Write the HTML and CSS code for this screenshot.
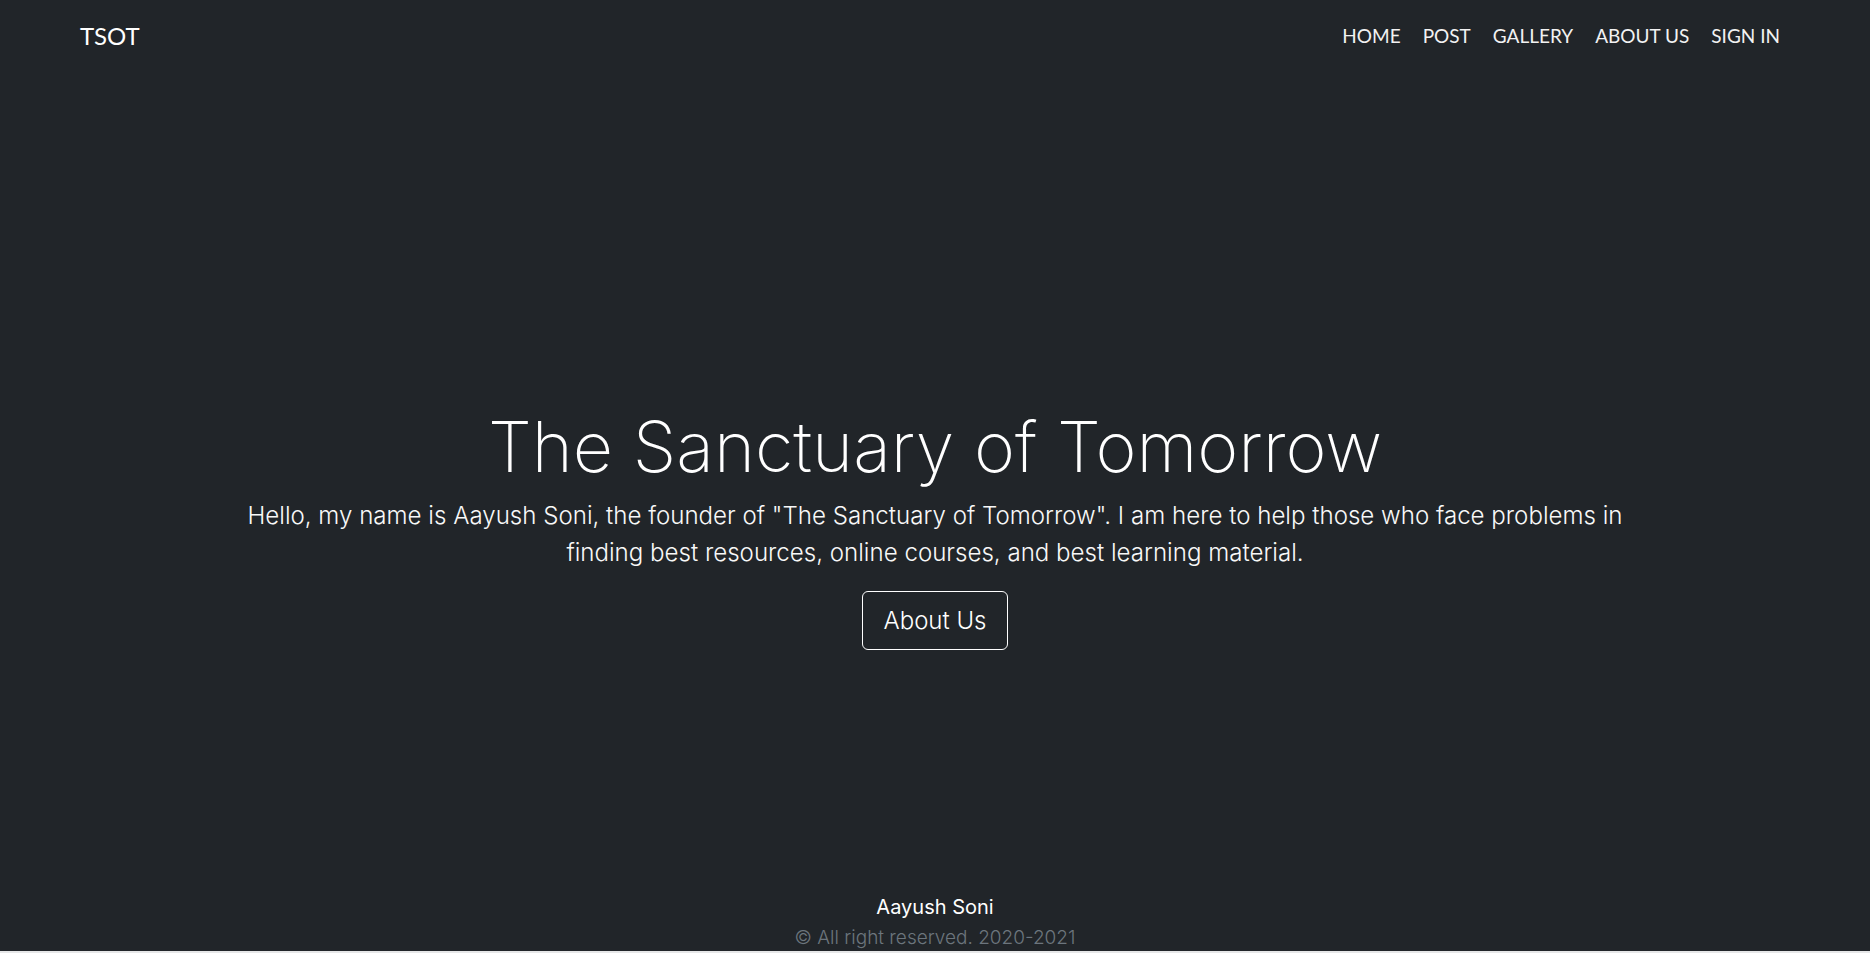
FILE: index.html
```html
<!DOCTYPE html>
<html lang="en">
<head>
<meta charset="utf-8">
<title>TSOT</title>
<link rel="stylesheet" href="styles.css">
</head>
<body>
<div class="page">
  <header class="masthead">
    <a class="brand" href="#">TSOT</a>
    <nav class="nav">
      <a href="#">HOME</a>
      <a href="#">POST</a>
      <a href="#">GALLERY</a>
      <a href="#">ABOUT US</a>
      <a href="#">SIGN IN</a>
    </nav>
  </header>
  <main class="hero">
    <h1 class="hero-title">The Sanctuary of Tomorrow</h1>
    <p class="hero-lead">Hello, my name is Aayush Soni, the founder of "The Sanctuary of Tomorrow". I am here to help those who face problems in finding best resources, online courses, and best learning material.</p>
    <a class="btn-outline" href="#">About Us</a>
  </main>
  <footer class="footer">
    <p class="footer-name">Aayush Soni</p>
    <p class="footer-copy">© All right reserved. 2020-2021</p>
  </footer>
</div>
</body>
</html>
```
FILE: styles.css
```css
html {
  background: #e6e7e8;
}
body {
  margin: 0;
  background: #212529;
  color: #fff;
  font-family: Inter, "Noto Sans", sans-serif;
}
.page {
  height: 951px;
  display: flex;
  flex-direction: column;
  overflow: hidden;
}
.masthead {
  display: flex;
  justify-content: space-between;
  align-items: center;
  padding: 0 90px 0 80px;
  height: 70px;
}
.brand {
  font-family: Lato, "Open Sans", sans-serif;
  font-size: 24px;
  color: #fff;
  text-decoration: none;
}
.nav {
  display: flex;
  gap: 22px;
}
.nav a {
  font-family: Lato, "Open Sans", sans-serif;
  font-size: 19px;
  color: #f2f2f2;
  text-decoration: none;
}
.hero {
  flex: 1;
  display: flex;
  flex-direction: column;
  align-items: center;
  justify-content: center;
  text-align: center;
  padding-top: 96px;
}
.hero-title {
  margin: 0 0 8px;
  font-size: 70px;
  font-weight: 200;
  line-height: 1.2;
}
.hero-lead {
  margin: 0 0 20px;
  max-width: 1400px;
  font-size: 24.1px;
  font-weight: 300;
  line-height: 37px;
  color: #f8f8f8;
}
.btn-outline {
  display: inline-block;
  padding: 10px 21px;
  border: 1px solid #fff;
  border-radius: 6px;
  color: #fff;
  text-decoration: none;
  font-size: 24px;
  font-weight: 300;
  line-height: 37px;
}
.footer {
  text-align: center;
}
.footer-name {
  margin: 0;
  font-size: 20px;
  line-height: 36px;
}
.footer-copy {
  margin: 0;
  font-size: 19px;
  font-weight: 300;
  line-height: 26px;
  color: #6c757d;
}
```
